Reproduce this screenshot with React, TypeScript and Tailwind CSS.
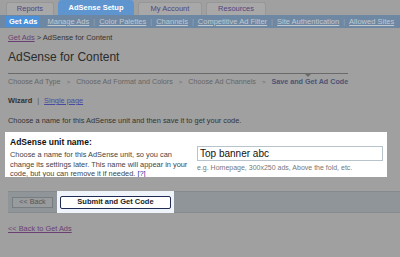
export default function App() {
  const subLinks = ['Manage Ads', 'Color Palettes', 'Channels', 'Competitive Ad Filter', 'Site Authentication', 'Allowed Sites']

  return (
    <div className="w-[400px] h-[257px] overflow-hidden bg-[#a0a0a0] font-['Liberation_Sans',Arial,sans-serif] text-[#2e2e2e]">
      {/* Tabs */}
      <div className="flex items-end h-[15px] pl-[6px] gap-[4px] text-[7.5px]">
        <div className="h-[13px] w-[48px] flex items-center justify-center bg-[#a8a8a8] border border-b-0 border-[#979797] rounded-t-[3px] text-[#4f4680]">Reports</div>
        <div className="h-[15px] w-[76px] flex items-center justify-center bg-[#5f95cf] rounded-t-[4px] text-white font-bold">AdSense Setup</div>
        <div className="h-[13px] w-[64px] flex items-center justify-center bg-[#a8a8a8] border border-b-0 border-[#979797] rounded-t-[3px] text-[#4f4680]">My Account</div>
        <div className="h-[13px] w-[60px] flex items-center justify-center bg-[#a8a8a8] border border-b-0 border-[#979797] rounded-t-[3px] text-[#4f4680]">Resources</div>
      </div>

      {/* Sub nav */}
      <div className="h-[13px] bg-[#6e88a4] flex items-center pl-[6px] text-[7.5px] whitespace-nowrap">
        <span className="bg-[#4c90d8] text-white font-bold px-[3px] h-[11px] flex items-center">Get Ads</span>
        {subLinks.map((l) => (
          <span key={l} className="flex items-center">
            {l !== 'Manage Ads' && <span className="text-[#8fa3b8] px-[4px]">|</span>}
            <span className={`${l === 'Manage Ads' ? 'ml-[7px]' : ''} text-[#c3c9cf] underline`}>{l}</span>
          </span>
        ))}
      </div>

      <div className="px-[8px]">
        {/* Breadcrumb */}
        <div className="mt-[5px] text-[7.5px] leading-[10px]">
          <span className="text-[#6a3f74] underline">Get Ads</span>
          <span className="text-[#333]"> &gt; AdSense for Content</span>
        </div>

        {/* Title */}
        <div className="mt-[7px] text-[12px] leading-[14px] text-[#2b2b2b]">AdSense for Content</div>

        {/* Steps */}
        <div className="mt-[9px] w-[340px] h-px bg-[#6a6a6a] relative">
          <div className="absolute left-[297px] top-px w-0 h-0 border-l-[3px] border-r-[3px] border-t-[3px] border-l-transparent border-r-transparent border-t-[#6a6a6a]" />
        </div>
        <div className="mt-[3px] flex items-center gap-[6px] text-[7.2px] leading-[10px] whitespace-nowrap text-[#666]">
          <span>Choose Ad Type</span>
          <span className="text-[6px]">&gt;</span>
          <span>Choose Ad Format and Colors</span>
          <span className="text-[6px]">&gt;</span>
          <span>Choose Ad Channels</span>
          <span className="text-[6px]">&gt;</span>
          <span className="font-bold text-[#4c5478]">Save and Get Ad Code</span>
        </div>

        {/* Wizard */}
        <div className="mt-[9px] flex items-center gap-[5px] text-[7.4px] leading-[10px]">
          <span className="font-bold text-[#333]">Wizard</span>
          <span className="text-[#555]">|</span>
          <span className="text-[#4a4aa0] underline">Single page</span>
        </div>

        <div className="mt-[10px] text-[7.4px] leading-[10px] text-[#333]">
          Choose a name for this AdSense unit and then save it to get your code.
        </div>
      </div>

      {/* Highlighted form box */}
      <div className="mt-[6px] ml-[5px] w-[382px] h-[45px] bg-white overflow-hidden flex pl-[5px] pt-[5px]">
        <div className="w-[182px]">
          <div className="text-[8.5px] leading-[11px] font-bold text-[#111]">AdSense unit name:</div>
          <div className="mt-[2px] text-[7.4px] leading-[9.5px] text-[#444]">
            Choose a name for this AdSense unit, so you can change its settings later. This name will appear in your code, but you can remove it if needed. <span className="text-[#2a2a9a] underline">[?]</span>
          </div>
        </div>
        <div className="ml-[5px] pt-[9px]">
          <div className="w-[186px] h-[15px] border border-[#b7c4cc] flex items-center px-[2px] text-[10px] text-[#111]">Top banner abc</div>
          <div className="mt-[2px] text-[7px] leading-[9px] text-[#777]">e.g. Homepage, 300x250 ads, Above the fold, etc.</div>
        </div>
      </div>

      {/* Button bar */}
      <div className="mt-[14px] ml-[8px] h-[22px] bg-[#8f9598] border-y border-[#858a8d] flex items-center">
        <div className="ml-[4px] w-[41px] h-[11px] border border-[#787d80] bg-[#999c9e] flex items-center justify-center text-[7.2px] text-[#555]">&lt;&lt; Back</div>
        <div className="ml-[4px] h-[22px] w-[117px] bg-[#eef4fa] flex items-center justify-center">
          <div className="w-[111px] h-[13px] bg-white border border-[#1f2a55] rounded-[2px] flex items-center justify-center text-[7.5px] font-bold text-[#222]">Submit and Get Code</div>
        </div>
      </div>

      <div className="mt-[11px] ml-[8px] text-[7.4px] leading-[10px] text-[#6a3f74] underline">&lt;&lt; Back to Get Ads</div>
    </div>
  )
}
